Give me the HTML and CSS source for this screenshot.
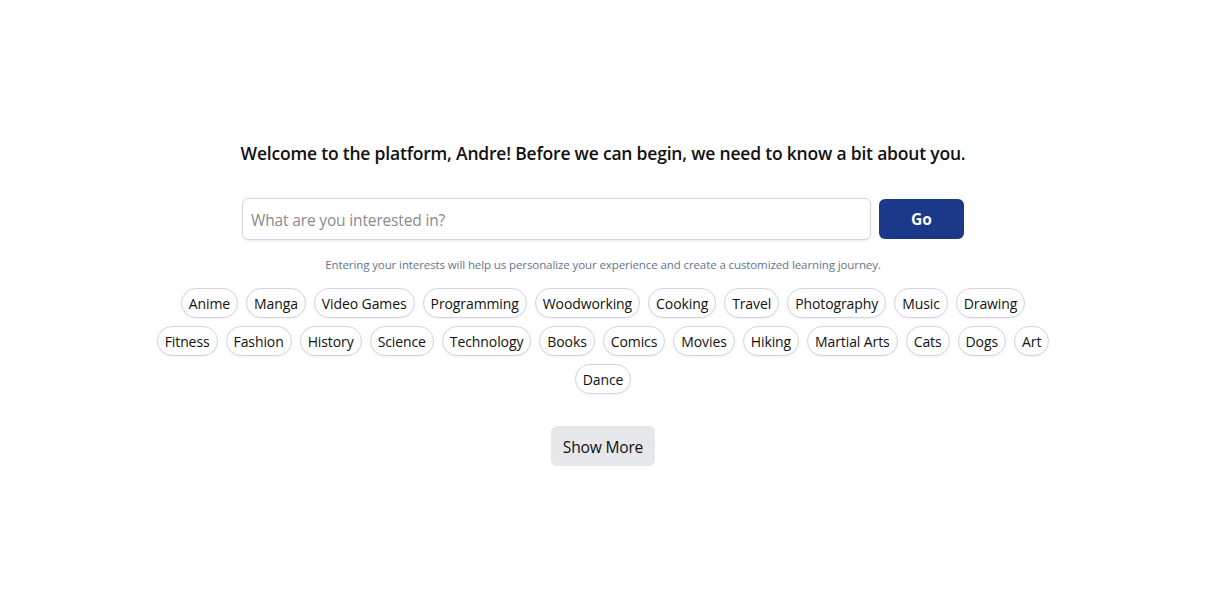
FILE: index.html
```html
<!DOCTYPE html>
<html lang="en">
<head>
<meta charset="utf-8">
<title>Welcome</title>
<link rel="stylesheet" href="styles.css">
</head>
<body>
<main class="page">
  <section class="onboard">
    <h1 class="title">Welcome to the platform, Andre! Before we can begin, we need to know a bit about you.</h1>
    <form class="search-row" onsubmit="return false;">
      <input class="search-input" type="text" placeholder="What are you interested in?">
      <button class="go-btn" type="submit">Go</button>
    </form>
    <p class="helper">Entering your interests will help us personalize your experience and create a customized learning journey.</p>
    <div class="chips">
      <button class="chip">Anime</button>
      <button class="chip">Manga</button>
      <button class="chip">Video Games</button>
      <button class="chip">Programming</button>
      <button class="chip">Woodworking</button>
      <button class="chip">Cooking</button>
      <button class="chip">Travel</button>
      <button class="chip">Photography</button>
      <button class="chip">Music</button>
      <button class="chip">Drawing</button>
      <button class="chip">Fitness</button>
      <button class="chip">Fashion</button>
      <button class="chip">History</button>
      <button class="chip">Science</button>
      <button class="chip">Technology</button>
      <button class="chip">Books</button>
      <button class="chip">Comics</button>
      <button class="chip">Movies</button>
      <button class="chip">Hiking</button>
      <button class="chip">Martial Arts</button>
      <button class="chip">Cats</button>
      <button class="chip">Dogs</button>
      <button class="chip">Art</button>
      <button class="chip">Dance</button>
    </div>
    <button class="more-btn" type="button">Show More</button>
  </section>
</main>
</body>
</html>
```

FILE: styles.css
```css
* { box-sizing: border-box; }
html, body { margin: 0; padding: 0; background: #ffffff; }
body {
  font-family: "Open Sans", "Noto Sans", "Liberation Sans", sans-serif;
  color: #111111;
}
.page {
  padding: 139px 20px 0 0;
  display: flex;
  justify-content: center;
}
.onboard {
  width: 904px;
  display: flex;
  flex-direction: column;
  align-items: center;
}
.title {
  margin: 0;
  font-size: 17.5px;
  line-height: 28px;
  font-weight: 600;
  letter-spacing: -0.2px;
  color: #111111;
  white-space: nowrap;
}
.search-row {
  margin: 31px 0 0;
  display: flex;
  align-items: center;
  gap: 8px;
  width: 722px;
}
.search-input {
  flex: 1;
  height: 42px;
  border: 1px solid #d1d5db;
  border-radius: 6px;
  padding: 1px 8px 0;
  font-family: inherit;
  font-size: 15.5px;
  letter-spacing: -0.15px;
  color: #111;
  box-shadow: 0 1px 2px rgba(0,0,0,0.08);
  outline: none;
}
.search-input::placeholder { color: #8b8b8b; }
.go-btn {
  width: 85px;
  height: 40px;
  border: none;
  border-radius: 6px;
  background: #1c3888;
  color: #ffffff;
  font-family: inherit;
  font-size: 15.5px;
  font-weight: 700;
  cursor: pointer;
}
.helper {
  margin: 17px 0 0;
  font-size: 11.5px;
  line-height: 16px;
  color: #64748b;
  letter-spacing: -0.1px;
}
.chips {
  margin-top: 11px;
  display: flex;
  flex-wrap: wrap;
  justify-content: center;
  width: 904px;
}
.chip {
  margin: 4px;
  height: 30px;
  padding: 1px 7px 0;
  border: 1px solid #d1d5db;
  border-radius: 9999px;
  background: #ffffff;
  box-shadow: 0 1px 2px rgba(0,0,0,0.06);
  font-family: inherit;
  font-size: 14px;
  letter-spacing: -0.1px;
  color: #111111;
  line-height: 20px;
  cursor: pointer;
}
.more-btn {
  margin-top: 28px;
  height: 40px;
  padding: 1px 12px 0;
  border: none;
  border-radius: 6px;
  background: #e5e7eb;
  color: #111111;
  font-family: inherit;
  font-size: 15.6px;
  letter-spacing: -0.2px;
  cursor: pointer;
}
```
